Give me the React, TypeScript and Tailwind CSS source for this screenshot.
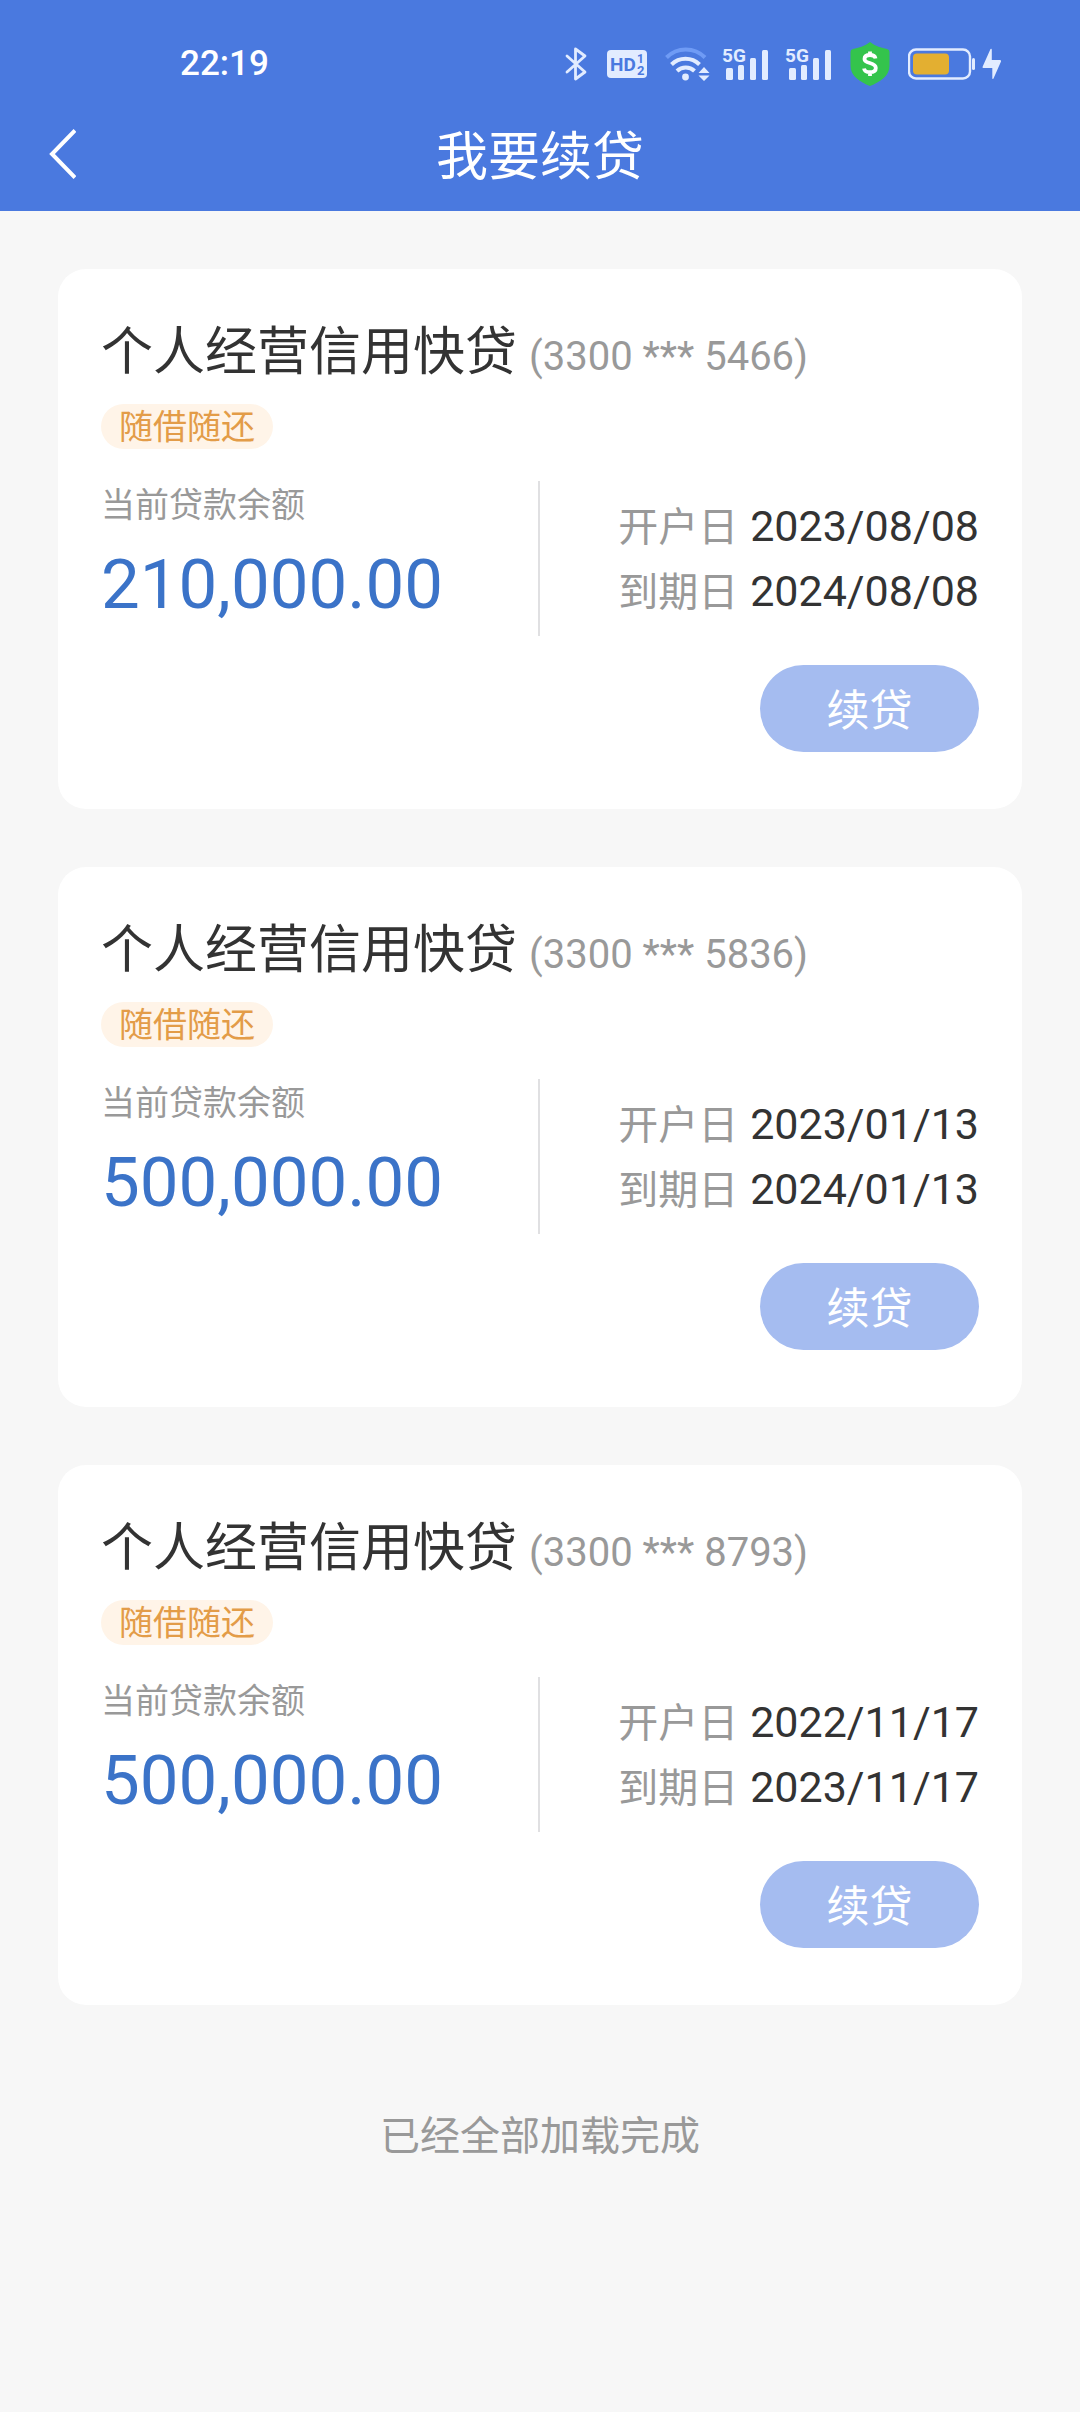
import React from 'react';

interface Loan {
  id: number;
  name: string;
  account: string;
  tag: string;
  balance: string;
  openDate: string;
  dueDate: string;
}

const loans: Loan[] = [
  {
    id: 1,
    name: '个人经营信用快贷',
    account: '3300 *** 5466',
    tag: '随借随还',
    balance: '210,000.00',
    openDate: '2023/08/08',
    dueDate: '2024/08/08',
  },
  {
    id: 2,
    name: '个人经营信用快贷',
    account: '3300 *** 5836',
    tag: '随借随还',
    balance: '500,000.00',
    openDate: '2023/01/13',
    dueDate: '2024/01/13',
  },
  {
    id: 3,
    name: '个人经营信用快贷',
    account: '3300 *** 8793',
    tag: '随借随还',
    balance: '500,000.00',
    openDate: '2022/11/17',
    dueDate: '2023/11/17',
  },
];

function BluetoothIcon() {
  return (
    <svg className="w-[22px] h-[34px]" viewBox="0 0 22 34" fill="none" stroke="currentColor" strokeWidth={2.8} strokeLinejoin="round" strokeLinecap="round">
      <path d="M2 9 L20 25 L10.500 32 V2 L20 9 L2 25" />
    </svg>
  );
}

function HdIcon() {
  return (
    <svg className="w-10 h-7" viewBox="0 0 40 28">
      <rect width="40" height="28" rx="4" fill="currentColor" />
      <g fill="#4a79df" fontWeight="700">
        <text x="3" y="21" fontSize="19">HD</text>
        <text x="30" y="13" fontSize="12">1</text>
        <text x="30" y="25" fontSize="13">2</text>
      </g>
    </svg>
  );
}

function WifiIcon() {
  return (
    <svg className="w-[45px] h-[34px]" viewBox="0 0 45 34" fill="none" strokeWidth={4}>
      <path d="M1.500 10.500 A27 27 0 0 1 40 10.500" stroke="#6f9bf5" />
      <path d="M6.500 17.500 A20 20 0 0 1 34.500 17.500" stroke="currentColor" />
      <path d="M12 24 A12.500 12.500 0 0 1 29.500 24" stroke="currentColor" />
      <circle cx="20.500" cy="30" r="3.400" fill="currentColor" />
      <path d="M39 20 L44.500 26 H33.500 Z M39 34 L44.500 28.500 H33.500 Z" fill="currentColor" />
    </svg>
  );
}

function SignalIcon() {
  return (
    <svg className="w-[47px] h-[46px]" viewBox="0 -6 47 46" fill="currentColor">
      <text x="0" y="15" fontSize="19" fontWeight="700">5G</text>
      <rect x="4" y="21" width="7" height="12" rx="1.500" />
      <rect x="16" y="18" width="6" height="15" rx="1.500" />
      <rect x="28" y="11" width="6" height="22" rx="1.500" />
      <rect x="40" y="3" width="6" height="30" rx="1.500" />
    </svg>
  );
}

function ShieldIcon() {
  return (
    <svg className="w-10 h-11" viewBox="0 0 40 44">
      <path d="M20 0 C25 4 32 6 37 7 Q39.500 7.500 39.500 10 V24 C39.500 34 30 40 20 44 C10 40 0.500 34 0.500 24 V10 Q0.500 7.500 3 7 C8 6 15 4 20 0 Z" fill="#34c44c" />
      <path d="M25.500 16.500 C25 14 23 13 20 13 C16.500 13 14.500 14.500 14.500 17 C14.500 22.500 25.800 19.500 25.800 26 C25.800 28.700 23.500 30.200 20 30.200 C16.500 30.200 14.500 29 14 26.500 M20 9.500 V13 M20 30 V34" fill="none" stroke="#fff" strokeWidth={3.8} />
    </svg>
  );
}

function BatteryIcon() {
  return (
    <svg className="w-[68px] h-8" viewBox="0 0 68 32">
      <rect x="1" y="1.500" width="61" height="29" rx="7" fill="none" stroke="currentColor" strokeWidth={2.4} />
      <rect x="5" y="5.500" width="36" height="21" rx="4" fill="#e3af31" />
      <rect x="64" y="10" width="3" height="12" rx="1.500" fill="currentColor" />
    </svg>
  );
}

function BoltIcon() {
  return (
    <svg className="w-5 h-8" viewBox="0 0 20 32" fill="currentColor">
      <path d="M8.500 1 Q9.800 0 9.800 2 V12 H18 Q19.500 12 19 13.500 L11.500 30.500 Q10.300 31.800 10.300 30 V20 H1.500 Q0 20 0.700 18.500 Z" />
    </svg>
  );
}

function StatusBar() {
  return (
    <div className="flex h-[100px] items-center justify-between pt-7 pl-[180px] pr-[78px]">
      <span className="text-[35px] leading-10 font-medium">22:19</span>
      <div className="flex items-center text-[#e2ecff]">
        <BluetoothIcon />
        <div className="ml-5"><HdIcon /></div>
        <div className="ml-[18px]"><WifiIcon /></div>
        <div className="ml-3"><SignalIcon /></div>
        <div className="ml-4"><SignalIcon /></div>
        <div className="ml-[18px]"><ShieldIcon /></div>
        <div className="ml-[18px]"><BatteryIcon /></div>
        <div className="ml-[6px]"><BoltIcon /></div>
      </div>
    </div>
  );
}

function LoanCard({ loan }: { loan: Loan }) {
  return (
    <article className="rounded-[28px] bg-white px-[43px] pt-12 pb-[57px]">
      <div className="flex h-[72px] items-baseline gap-3 leading-[72px] whitespace-nowrap">
        <h2 className="text-[52px] text-[#333]">{loan.name}</h2>
        <span className="text-[40px] text-[#999]">({loan.account})</span>
      </div>
      <div className="mt-[15px] flex">
        <span className="h-[45px] rounded-full bg-[#fff4e8] px-[18px] text-[34px] leading-[47px] text-[#e39c48]">{loan.tag}</span>
      </div>

      <div className="mt-8 flex h-[155px]">
        <div className="w-1/2 border-r-2 border-[#e0e0e2]">
          <p className="text-[34px] leading-[48px] text-[#999]">当前贷款余额</p>
          <p className="mt-4 text-[69px] leading-[80px] text-[#3b73c8]">{loan.balance}</p>
        </div>
        <dl className="flex w-1/2 flex-col items-end justify-center leading-[65px] whitespace-nowrap">
          <div className="flex h-[65px] items-baseline gap-3">
            <dt className="text-[40px] text-[#999]">开户日</dt>
            <dd className="text-[43px] text-[#333]">{loan.openDate}</dd>
          </div>
          <div className="flex h-[65px] items-baseline gap-3">
            <dt className="text-[40px] text-[#999]">到期日</dt>
            <dd className="text-[43px] text-[#333]">{loan.dueDate}</dd>
          </div>
        </dl>
      </div>

      <div className="mt-[29px] flex justify-end">
        <button type="button" className="h-[87px] w-[219px] rounded-full bg-[#a5bcf0] pt-1 text-[43px] leading-[60px] text-white">
          续贷
        </button>
      </div>
    </article>
  );
}

export default function App() {
  return (
    <div className="min-h-screen bg-[#f7f7f7] font-[Roboto,'Noto_Sans_CJK_SC',sans-serif]">
      <header className="bg-[#4a79df] text-white">
        <StatusBar />
        <nav className="grid h-[111px] grid-cols-[120px_1fr_120px] items-center pb-1">
          <button type="button" className="flex h-full items-center pl-12" aria-label="返回">
            <svg className="w-7 h-[50px]" viewBox="0 0 28 50" fill="none" stroke="currentColor" strokeWidth={4}>
              <path d="M27 1.500 L4 25 L27 48.500" />
            </svg>
          </button>
          <h1 className="pt-2 text-center text-[52px] leading-[72px]">我要续贷</h1>
        </nav>
      </header>

      <main className="flex flex-col gap-[58px] px-[58px] pt-[58px]">
        {loans.map((loan) => (
          <LoanCard key={loan.id} loan={loan} />
        ))}
      </main>

      <p className="pt-[102px] pb-16 text-center text-[40px] leading-[60px] text-[#999]">已经全部加载完成</p>
    </div>
  );
}
